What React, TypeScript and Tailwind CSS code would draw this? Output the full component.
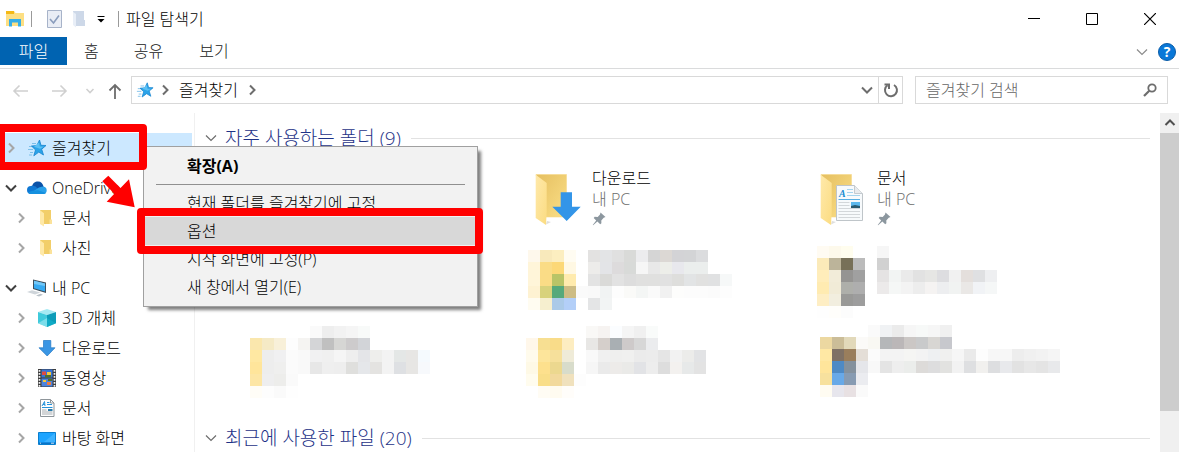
import React, { useState } from 'react';

type IconProps = { className?: string };

const Chevron: React.FC<IconProps & { dir: 'right' | 'down' | 'up'; thick?: boolean }> = ({ dir, thick, className }) => {
    const d = { right: 'M4 1.5 8.5 6 4 10.5', down: 'M1 3.5 6 8.5 11 3.5', up: 'M1.5 8 6 3.5 10.5 8' }[dir];
    return (
        <svg viewBox="0 0 12 12" className={`h-3 w-3 shrink-0 ${className || ''}`} fill="none" stroke="currentColor" strokeWidth={thick ? 2 : 1.2}>
            <path d={d} />
        </svg>
    );
};

const StarIcon: React.FC<IconProps> = ({ className }) => (
    <svg viewBox="0 0 20 20" className={className}>
        <path d="M2 8.500h5M1 11.500h5M3 14.500h3M5 5.500h4M2 17h3" stroke="#7cc0ea" strokeWidth="1" />
        <path d="M12.500 2 14 7.300l5 .2-4.300 3.700 1.800 5.800-4.700-2.900-5 3.700 1.700-5.900L4.500 8l5.300-.4z" fill="#2ba3e8" stroke="#1583cf" strokeWidth=".8" />
        <path d="m12 4.500.8 4 4 .2-3.800 2-6-2z" fill="#5cc0f4" />
    </svg>
);

const CloudIcon = () => (
    <svg viewBox="0 0 20 20" className="h-5 w-5">
        <path d="M5 9C5.500 5 8 3.500 11 3.500S16 5.500 16.600 9L11 13z" fill="#0a52a8" />
        <path d="M4 16A4 4 0 0 1 4 8c2-.6 4 .2 5.500 1.200L14 16z" fill="#0f78d4" />
        <path d="M16.400 8.500a3.800 3.800 0 0 1 .2 7.500H4.500c2-3 7-7.500 11.900-7.500z" fill="#28a0ea" />
        <path d="M1 14.500c3-1.500 7-2.300 10-2.200L19 15c-.6.700-1.300 1-2.200 1H3.500c-1 0-1.900-.6-2.500-1.500z" fill="#1490df" />
    </svg>
);

const SmallFolder = () => (
    <svg viewBox="0 0 20 20" className="h-5 w-5">
        <path d="M3 2h11v14H6z" fill="#f2ce69" />
        <path d="M12.500 11.500H15V16h-2.500z" fill="#fbe29a" />
        <path d="M3 2.300l4 3V18.500L3 16z" fill="#ffe9a8" />
    </svg>
);

const PcIcon = () => (
    <svg viewBox="0 0 20 20" className="h-5 w-5">
        <path d="M6 1.500 19 4.500V15L6 11z" fill="#3f4f5c" />
        <path d="M7 2.800 18 5.500v8L7 10.200z" fill="#36aaf2" />
        <path d="m7 2.800 11 2.700v2.500L7 6z" fill="#71c7f7" />
        <path d="m0 14 5-1.800 8.500 2.300-5.500 2z" fill="#cfd5da" />
        <path d="m9 17.500 4.500-1.700 2.500.9-4 1.800z" fill="#b9c1c8" />
    </svg>
);

const CubeIcon = () => (
    <svg viewBox="0 0 20 20" className="h-5 w-5">
        <path d="M1 4 10 1l9 3-9 3z" fill="#a5eaf3" />
        <path d="M1 4 10 7v12l-9-3.700z" fill="#3fcadb" />
        <path d="M19 4 10 7v12l9-3.700z" fill="#0c9cb8" />
        <path d="M1 15.300 10 10v9z" fill="#a5eaf3" opacity=".6" />
        <path d="M10 10 19 15.300 10 19z" fill="#14b5cf" opacity=".6" />
    </svg>
);

const DownIcon = () => (
    <svg viewBox="0 0 20 20" className="h-5 w-5">
        <path d="M6.500 2.500h7.300v7.300h4.200L10.200 18 2 9.800h4.500z" fill="#3a96e4" stroke="#2378c4" strokeWidth=".7" />
    </svg>
);

const FilmIcon = () => (
    <svg viewBox="0 0 20 20" className="h-5 w-5">
        <path d="M1 1h18v18H1z" fill="#3d3d3d" />
        <path d="M2.500 2v17M17.500 2v17" stroke="#f2f2f2" strokeWidth="1.700" strokeDasharray="1.700 1.300" />
        <path d="M4.500 1.500h11v8h-11z" fill="#3774d8" />
        <path d="M4.500 10.500h11v8h-11z" fill="#4b83df" />
        <path d="M5 3.500h4v3.500H5z" fill="#e04b42" />
        <path d="M10 4h4v3h-4zM6 12h3v2H6z" fill="#f3c83d" />
        <path d="M8 7h6v2.500H8zM11 11h4v2h-4z" fill="#53702b" />
        <path d="M10 14h4v3h-4z" fill="#ee7c3d" />
    </svg>
);

const DocIcon = () => (
    <svg viewBox="0 0 20 20" className="h-5 w-5">
        <path d="M3.500 1.500h10l3.500 3.500v13.500H3.500z" fill="#fdfdfd" stroke="#8e959a" />
        <path d="M13.500 1.500V5H17" fill="none" stroke="#8e959a" />
        <path d="m5 8 2.500-4.500L8 8M6 6.500h2M10 4.500h2.500M10 6.500h5M5 9.500h10.500" stroke="#2492db" fill="none" />
        <path d="M5 12h4.500M5 14h10.500M5 16h10.500" stroke="#a8adb1" />
        <path d="M11 11h4.500v2H11z" fill="#287aa8" />
    </svg>
);

const DesktopIcon = () => (
    <svg viewBox="0 0 20 20" className="h-5 w-5">
        <path d="M1.500 4.500h17v12h-17z" fill="#1da4ff" stroke="#0a7fcf" />
        <path d="M2 14.500h16V16H2z" fill="#0b72c4" />
        <path d="M3 15.200h1M14 15.200h3" stroke="#fff" strokeWidth=".8" />
        <path d="M7 14 18 5v9z" fill="#3db2ff" />
    </svg>
);

const BigFolder: React.FC<{ kind: 'download' | 'document' }> = ({ kind }) => (
    <svg viewBox="0 0 56 60" className="h-[60px] w-14 shrink-0">
        <defs>
            <linearGradient id={`back-${kind}`} x1="0" y1="0" x2="1" y2="1">
                <stop offset="0" stopColor="#e5bf60" />
                <stop offset="1" stopColor="#fbdf87" />
            </linearGradient>
            <linearGradient id={`flap-${kind}`} x1="0" y1="0" x2="1" y2="1">
                <stop offset="0" stopColor="#ffe9aa" />
                <stop offset="1" stopColor="#fbdc82" />
            </linearGradient>
        </defs>
        <path d="M14 56.500 19 54l-4-1z" fill="#dedede" />
        <path d="M4 6.500h30.500V49H14z" fill={`url(#back-${kind})`} stroke="#f6d98a" strokeWidth=".6" />
        <path d="M3.700 6.800 14.700 15v29L14 57 3.700 50z" fill={`url(#flap-${kind})`} />
        {kind === 'download' ? (
            <path d="M28.700 24.300H40v14.400h8.700L34.700 53 20.300 38.700h8.400z" fill="#3395e8" />
        ) : (
            <g>
                <path d="M19.500 17.500h18l8 8v27h-26z" fill="#f7fafc" stroke="#bfc5c9" />
                <path d="M37.500 17.500v8h8" fill="#e8ebee" stroke="#c4cacf" />
                <text x="22" y="28.500" fontSize="10" fontStyle="italic" fontWeight="700" fill="#168bd0" fontFamily="Liberation Serif, serif">A</text>
                <path d="M30 21.500h6M30 24.500h6M30 27.500h13" stroke="#a5d4ee" />
                <path d="M21.500 31.500H43" stroke="#57b0e4" />
                <path d="M21.500 34.500h11M21.500 37.500h11M21.500 40.500H43M21.500 43.500H43M21.500 46.500H43M21.500 49.500H43" stroke="#d3d7da" />
                <path d="M34 34h9v6h-9z" fill="#5db9ee" />
                <path d="m34 38 4-1 5 1v2h-9z" fill="#2a5a70" />
            </g>
        )}
    </svg>
);

const PinIcon = () => (
    <svg viewBox="0 0 14 14" className="h-3.5 w-3.5">
        <path d="M8.500.5 13.500 5l-1.800.8-2.400 2.600.1 2.800-1.200 1.100-2.800-2.700-4.300 3.600L.7 13l3.500-4.400L1.700 6l1-1.200 3 .1L8 2.500z" fill="#8c979f" />
    </svg>
);

interface Mosaic {
    x: number;
    y: number;
    rows: string[];
}

const mosaics: Record<string, Mosaic> = {
    a: {
        x: 2, y: 4, rows: [
            'fef8ec f8e9bb fceec0 fffcf2 - e3e2e1 e3e4e6 e0e0e0 d9dad8 ececee d5d5d5 dcd8d4 d3d3d6 d3d4d6 dbdcde',
            'fff5d9 fadc86 fcd877 fff8e3 - edecea e3e4e7 dddbdc d8dad8 f6f6f6 e8e8e8 edeee9 e8e8ed ebeeed ebeeed',
            'fff5d9 fadc86 b9c467 ffebae - e3e3e3 dadad8 e2e2e2 dddddd e0e0df e0e0df e1e1e1 dededc e2e4e5 e1e1e0 e0e1e2 f6f8f8',
            'fef2d2 d8d27c 56a97b cdbc84 fafafa f9f9f9 f1f3f3 fdfdfd fafaf8 f4f6f5 fafafa f1f1f1 fdfdfc fcfcfc fcfcfc fbfbfb fdfdfd',
            'fffcf1 f6efcf abcae8 b3cff8 - e4e5e6 f2f4f4',
        ],
    },
    b: {
        x: 6, y: 0, rows: [
            'fffbf2 fdf9eb fffdee - - f6f6f6',
            'fbeab9 bcb49a 777058 bbbbbb - d1d1d1',
            'ffedba f2ecd9 959492 a0a0a0 - e5e3e3 f2f4f3 eaeaea e2e2e2 e6e6e4 dddde0 f1f1f1 e4dfdc dfe0e2 eeeff1',
            'ffebb1 f1ebd7 aeafaa aeaeae - eceaea f5f7f6 f3f3f3 ededed f5f3f2 edeef0 f1f3f2 eae8e6 f1f3f6 f5f7f7',
            'feeec4 f2eedf 999997 9d9d9d',
            'fefefe fffefb fcfcfc',
        ],
    },
    c: {
        x: 9, y: 2, rows: [
            '- - - - - fafafa eeeeee f2f2f2 f5f5f5 f8faf9',
            'fae7ad f5eac6 f8f0d9 fdfdfd f5f4f2 d4d5d7 c0c0c0 d6d6d4 cdcbcc d2d4d8',
            'ffe8a2 ededed f0f0f1 fbfbfb f9f9f9 f1f1f2 f0f0f0 f5f5f5 eeeeee e4e5e8 eeeeec f3f3f3 e4e7e6 e7e6e4 f5fafe',
            'ffe59b ededed efefee fbfbfb f9f9f9 e7e7e7 efefef eeeeee dfdfdd e5e7ea e4e3e1 f3f3f3 dee0e3 e7e6e4 f7f9fc',
            'fde6a5 eeeeef ededeb fafafa',
            'fffdf7 fdfdfd fafafa fefefe',
        ],
    },
    d: {
        x: 0, y: 2, rows: [
            '- - - - - f9f8f6 f6f3f1 fbfdff f5f5f5 f0f0f0 f9fbfa',
            'fff7ea f7df92 f9dc89 fdedc1 - e8e7e5 d5cfcb a9afb3 cecaca d7d7d7 ebecee',
            'fffbec fde59b f6e09b efebd8 - f9f9f9 f0f0f0 efefee f0f0ef ebebeb ececec e5e5e5 f2f2f2 ececea e2e3e5',
            'fef9e6 fde08d ecd88f d8dccb - f6f6f6 eaeaea edebe9 eaeae8 e2e3e6 ededed dddddd f3f1ef e7e9e9 e3e3e3',
            'fffcee f9de89 f2d99c f0e1bd fdfdfd',
            '- fffcf4 fffbf0 fffdfa',
        ],
    },
    e: {
        x: 9, y: 1, rows: [
            '- - - - fafafa f0f2f4 ebebeb f6f6f6 f7f9f8 f6f6f6 f0f0f0',
            'ecd8a1 cbbd98 e2d9ba fbfaf8 f9f8f3 b5b7b9 bbb7b8 cbc7c5 c9cacb d8d6d3 c7c8cd',
            'ffe8a4 7f7165 9a7e5c e4ded7 fbfbfb f3f3f3 f3f3f3 f5f5f3 f3f3f3 eef0f2 f0f0ef f6f6f6 eaeaea fdfdfd f7f7f7 f7f7f7 ededed f0f0f0 f2f2f2 f5f5f5',
            'ffe59b 4e8ac5 84919d e5e6ea f8f8f8 e4e4e4 eeeeee ebedeb dddbd9 ddddde e2e2e0 f2f2f2 dedfe1 f1f0ee dddee0 e8e9ec e2e2e2 e7e7e7 e4e4e4 e8e9eb',
            'f7e19e 68a9e8 879bb2 ebecf0',
            'fffcf2 e7e6ed e8e1e3 fafafa',
        ],
    },
};

// folder whose icon and name are pixelated, 12px blocks
const MosaicTile: React.FC<{ mosaic: Mosaic }> = ({ mosaic }) => (
    <svg viewBox="0 0 285 78" className="h-[78px] w-[285px]" shapeRendering="crispEdges">
        {mosaic.rows.map((row, r) =>
            row.split(' ').map((c, i) =>
                c === '-' ? null : (
                    <rect key={`${r}-${i}`} x={mosaic.x + i * 12} y={mosaic.y + r * 12} width={12} height={12} fill={`#${c}`} />
                )
            )
        )}
    </svg>
);

const FolderTile: React.FC<{ name: string; kind: 'download' | 'document' }> = ({ name, kind }) => (
    <button className="flex h-[78px] items-start gap-1 pl-1.5 text-left leading-5">
        <BigFolder kind={kind} />
        <span className="flex flex-col items-start">
            <span className="h-[21px]">{name}</span>
            <span className="h-[23px] text-[#6d6d6d]">내 PC</span>
            <PinIcon />
        </span>
    </button>
);

interface TreeItem {
    label: string;
    icon: React.ReactNode;
    children?: TreeItem[];
}

const tree: TreeItem[] = [
    { label: '즐겨찾기', icon: <StarIcon className="h-5 w-5" /> },
    {
        label: 'OneDrive', icon: <CloudIcon />, children: [
            { label: '문서', icon: <SmallFolder /> },
            { label: '사진', icon: <SmallFolder /> },
        ],
    },
    {
        label: '내 PC', icon: <PcIcon />, children: [
            { label: '3D 개체', icon: <CubeIcon /> },
            { label: '다운로드', icon: <DownIcon /> },
            { label: '동영상', icon: <FilmIcon /> },
            { label: '문서', icon: <DocIcon /> },
            { label: '바탕 화면', icon: <DesktopIcon /> },
        ],
    },
];

const TreeRow: React.FC<{ item: TreeItem; nested?: boolean; selected?: boolean; onSelect: () => void }> = ({ item, nested, selected, onSelect }) => (
    <button onClick={onSelect} className={`flex h-[30px] w-full items-center whitespace-nowrap ${nested ? 'pl-[15px]' : 'pl-[5px]'} ${selected ? 'bg-[#cce8ff]' : ''}`}>
        <Chevron dir={item.children ? 'down' : 'right'} thick className={item.children ? 'text-[#404040]' : 'text-[#a6a6a6]'} />
        <span className="ml-2.5 mr-[5px] shrink-0">{item.icon}</span>
        {item.label}
    </button>
);

const SectionHeading: React.FC<{ title: string }> = ({ title }) => (
    <h2 className="flex h-[30px] items-center pl-2.5 pr-2.5 text-[19px] text-[#1e3287]">
        <Chevron dir="down" className="mr-2 text-[#6d6d6d]" />
        <span className="whitespace-nowrap">{title}</span>
        <span className="ml-2.5 h-px flex-1 bg-[#e2e2e2]" />
    </h2>
);

const menuItems = ['현재 폴더를 즐겨찾기에 고정', '옵션', '시작 화면에 고정(P)', '새 창에서 열기(E)'];

const ContextMenu = () => (
    <div role="menu" className="absolute left-[143px] top-[146px] w-[335px] border border-[#a0a0a0] bg-[#f2f2f2] pb-[5px] pt-[5px] shadow-[4px_4px_3px_-1px_rgba(0,0,0,0.5)]">
        <button role="menuitem" className="block h-7 w-full pl-[43px] text-left font-bold">확장(A)</button>
        <hr className="mx-3 my-1 border-[#909090]" />
        {menuItems.map(label => (
            <button key={label} role="menuitem" className={`block h-7 w-full pl-[43px] text-left ${label === '옵션' ? 'bg-[#d8d8d8]' : ''}`}>
                {label}
            </button>
        ))}
    </div>
);

const App: React.FC = () => {
    const [selected, setSelected] = useState('0');
    const [query, setQuery] = useState('');

    return (
        <div className="relative flex h-screen flex-col overflow-hidden bg-white font-['Open_Sans','Noto_Sans_CJK_KR',sans-serif] text-base font-light leading-6 text-black">
            <header className="flex h-[37px] shrink-0 items-center">
                <svg viewBox="0 0 20 20" className="ml-[5px] h-5 w-5">
                    <path d="M1 2h8l1.500 2H19v13H1z" fill="#fddf83" />
                    <path d="M1 2h8v3H1z" fill="#f5b915" />
                    <path d="M4 17.500V10h12v7.500h-3v-4H7v4z" fill="#35aee8" />
                </svg>
                <span className="ml-1.5 h-4 w-px bg-[#9a9a9a]" />
                <button aria-label="속성" className="ml-3.5">
                    <svg viewBox="0 0 18 20" className="h-5 w-[18px]">
                        <path d="M1.500 1.500h14v17h-14z" fill="#e9edf5" stroke="#a7b3c9" />
                        <path d="m4 10 3.500 4L13 6.500" fill="none" stroke="#8a9dbd" strokeWidth="1.600" />
                    </svg>
                </button>
                <button aria-label="새 폴더" className="ml-2">
                    <svg viewBox="0 0 18 20" className="h-5 w-[18px]">
                        <path d="M1 2h11v9h1v6H3z" fill="#cdd8e8" />
                        <path d="m1 3 3 2v13.500L1 16z" fill="#e8eef7" />
                    </svg>
                </button>
                <button aria-label="빠른 실행 도구 모음" className="ml-1.5">
                    <svg viewBox="0 0 10 10" className="h-2.5 w-2.5">
                        <path d="M1.500 2.500h7" stroke="#000" />
                        <path d="M1.500 5h7L5 8.500z" />
                    </svg>
                </button>
                <span className="ml-3 h-4 w-px bg-[#9a9a9a]" />
                <h1 className="ml-[7px] flex-1">파일 탐색기</h1>
                <button aria-label="최소화" className="flex w-[58px] justify-center">
                    <svg viewBox="0 0 12 12" className="h-3 w-3"><path d="M0 5.500h12" stroke="#000" /></svg>
                </button>
                <button aria-label="최대화" className="flex w-[58px] justify-center">
                    <svg viewBox="0 0 12 12" className="h-3 w-3"><path d="M.5.5h11v11H.5z" fill="none" stroke="#000" /></svg>
                </button>
                <button aria-label="닫기" className="flex w-[58px] justify-center">
                    <svg viewBox="0 0 12 12" className="h-3 w-3"><path d="m0 0 12 12M12 0 0 12" stroke="#000" strokeWidth="1.200" /></svg>
                </button>
            </header>

            <nav className="flex h-8 shrink-0 items-start border-b border-[#dadbdc] text-[#202020]">
                <button className="h-7 w-[67px] bg-[#0063b1] text-white">파일</button>
                <button className="h-7 px-[17px]">홈</button>
                <button className="h-7 px-[18px]">공유</button>
                <button className="h-7 px-[18px]">보기</button>
                <button aria-label="리본 최소화" className="ml-auto mr-2.5 mt-[9px]"><Chevron dir="down" className="text-[#8c8c8c]" /></button>
                <button aria-label="도움말" className="mr-[3px] mt-1.5 h-[18px] w-[18px] rounded-full border border-[#0a5ca8] bg-[#0a78d8] text-sm font-bold leading-4 text-white">?</button>
            </nav>

            <div className="flex h-[41px] shrink-0 items-start pt-[7px]">
                <div className="flex h-7 w-[131px] shrink-0 items-center pl-3 text-[#d0d0d0]">
                    <button aria-label="뒤로" className="mt-0.5">
                        <svg viewBox="0 0 18 14" className="h-3.5 w-[18px]" fill="none" stroke="currentColor" strokeWidth="1.600"><path d="M16 7H2M7.500 1.500 2 7l5.500 5.500" /></svg>
                    </button>
                    <button aria-label="앞으로" className="ml-5 mt-0.5">
                        <svg viewBox="0 0 18 14" className="h-3.5 w-[18px]" fill="none" stroke="currentColor" strokeWidth="1.600"><path d="M2 7h14M10.500 1.500 16 7l-5.500 5.500" /></svg>
                    </button>
                    <button aria-label="최근 위치" className="ml-[17px] mt-0.5">
                        <svg viewBox="0 0 10 10" className="h-2.5 w-2.5" fill="none" stroke="currentColor" strokeWidth="1.600"><path d="m1.500 3 3.500 3.500L8.500 3" /></svg>
                    </button>
                    <button aria-label="위로" className="ml-[13px] mt-0.5 text-[#6d6d6d]">
                        <svg viewBox="0 0 14 16" className="h-4 w-3.5" fill="none" stroke="currentColor" strokeWidth="1.800"><path d="M7 16V2M1.500 7.500 7 2l5.500 5.500" /></svg>
                    </button>
                </div>
                <div className="flex h-7 flex-1 items-center border border-[#d9d9d9] pl-1 text-[#6d6d6d]">
                    <StarIcon className="h-[18px] w-[18px]" />
                    <Chevron dir="right" thick className="ml-[5px]" />
                    <a href="#" className="ml-2 text-black">즐겨찾기</a>
                    <Chevron dir="right" thick className="ml-2" />
                    <button aria-label="이전 위치" className="ml-auto mr-[5px]"><Chevron dir="down" thick /></button>
                    <button aria-label="새로 고침" className="flex h-full w-6 items-center justify-center border-l border-[#d9d9d9]">
                        <svg viewBox="0 0 16 16" className="h-4 w-4" fill="none" stroke="currentColor" strokeWidth="2">
                            <path d="M11 3a6 6 0 1 1-6.500.300" />
                            <path d="M1.500 2.500h4.500v4.500" />
                        </svg>
                    </button>
                </div>
                <label className="ml-3 mr-[11px] flex h-7 w-[253px] items-center border border-[#d9d9d9] pl-2.5 pr-2.5">
                    <input
                        type="search"
                        aria-label="즐겨찾기 검색"
                        placeholder="즐겨찾기 검색"
                        value={query}
                        onChange={e => setQuery(e.target.value)}
                        className="min-w-0 flex-1 outline-none placeholder:text-[#666666]"
                    />
                    <svg viewBox="0 0 14 14" className="h-3.5 w-3.5" fill="none" stroke="#6d6d6d">
                        <circle cx="9" cy="5" r="3.700" strokeWidth="1.800" />
                        <path d="M6.300 7.700 1 13" strokeWidth="2.200" />
                    </svg>
                </label>
            </div>

            <div className="flex min-h-0 flex-1 pt-[3px]">
                <aside className="flex w-[195px] shrink-0 flex-col gap-2.5 border-r border-[#f0f0f0] pr-0.5 pt-5">
                    {tree.map((item, i) => (
                        <div key={item.label}>
                            <TreeRow item={item} selected={selected === `${i}`} onSelect={() => setSelected(`${i}`)} />
                            {item.children?.map((child, j) => (
                                <TreeRow key={child.label} item={child} nested selected={selected === `${i}-${j}`} onSelect={() => setSelected(`${i}-${j}`)} />
                            ))}
                        </div>
                    ))}
                </aside>

                <main className="min-w-0 flex-1 overflow-hidden pt-2.5">
                    <SectionHeading title="자주 사용하는 폴더 (9)" />
                    <div className="mb-[21px] mt-[15px] grid grid-cols-[repeat(auto-fill,285px)] pl-[46px]">
                        <span />
                        <FolderTile name="다운로드" kind="download" />
                        <FolderTile name="문서" kind="document" />
                        <span />
                        <MosaicTile mosaic={mosaics.a} />
                        <MosaicTile mosaic={mosaics.b} />
                        <MosaicTile mosaic={mosaics.c} />
                        <MosaicTile mosaic={mosaics.d} />
                        <MosaicTile mosaic={mosaics.e} />
                    </div>
                    <SectionHeading title="최근에 사용한 파일 (20)" />
                </main>

                <div className="flex w-[19px] shrink-0 flex-col bg-[#f0f0f0]">
                    <button aria-label="위로 스크롤" className="flex h-5 items-center justify-center text-[#505050]"><Chevron dir="up" thick /></button>
                    <div className="h-[278px] bg-[#cdcdcd]" />
                </div>
            </div>

            <ContextMenu />

            {/* highlights */}
            <div className="pointer-events-none absolute left-[-3px] top-[124px] h-[46px] w-[150px] rounded-sm border-8 border-[#ff0000]" />
            <div className="pointer-events-none absolute left-[137px] top-[208px] h-[46px] w-[346px] rounded-sm border-8 border-[#ff0000]" />
            <svg viewBox="0 0 36 34" className="pointer-events-none absolute left-[101px] top-[175px] h-[34px] w-9">
                <path d="M7.300.7 19.500 13 28 4.300 33.700 32.300 5.700 26.700l7.600-8L1.300 6.300z" fill="#ff0000" />
            </svg>
        </div>
    );
};

export default App;
